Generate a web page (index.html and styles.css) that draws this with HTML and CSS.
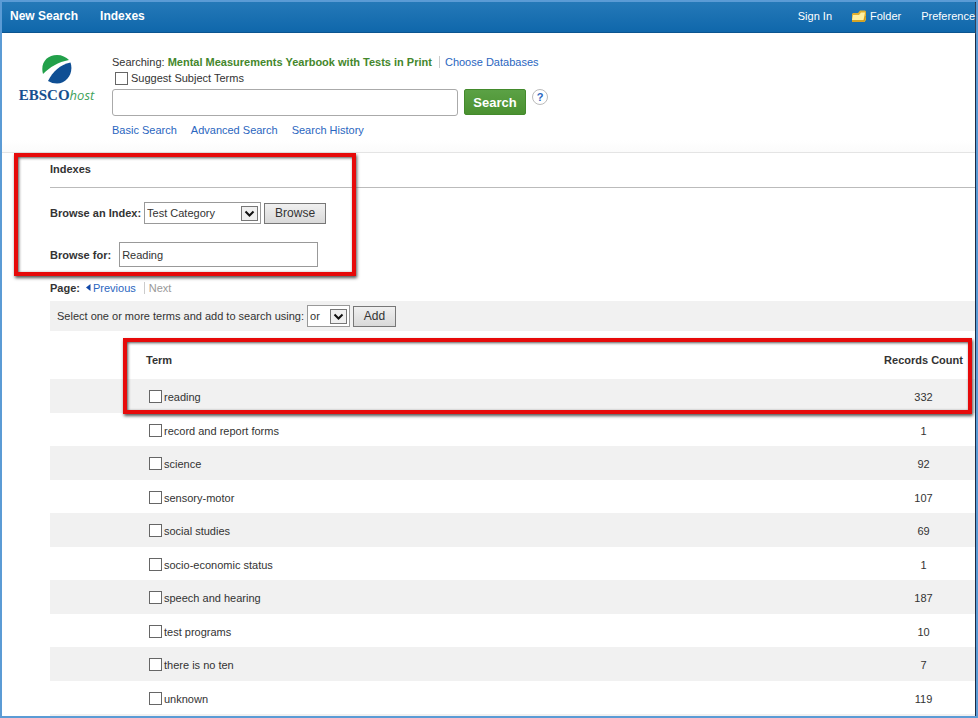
FILE: index.html
```
<!DOCTYPE html>
<html lang="en">
<head>
  <meta charset="UTF-8">
  <meta name="viewport" content="width=device-width, initial-scale=1.0">
  <title>EBSCOhost - Indexes</title>
  <link rel="stylesheet" href="styles.css">
</head>
<body>
<div class="page">
  <header class="topbar">
    <nav class="nav-main">
      <a href="#">New Search</a>
      <a href="#">Indexes</a>
    </nav>
    <nav class="nav-user">
      <a href="#">Sign In</a>
      <a href="#" class="folder">
        <svg width="14" height="12" viewBox="0 0 14 12" aria-hidden="true">
          <path d="M0 4l1-1h5l2-2.500h5l1 1V10l-1.500 2H0z" fill="#e0b030"/>
          <path d="M1 5h6l2-2.500h4L11.500 10H0z" fill="#fff0a0"/>
          <path d="M0 11h12l1.500-5" fill="none" stroke="#c9981c"/>
        </svg>
        Folder
      </a>
      <a href="#">Preference</a>
    </nav>
  </header>

  <section class="search-area">
    <a href="#" class="logo">
      <svg width="30" height="30" viewBox="0 0 30 30" aria-hidden="true">
        <path d="M1 20C-2 9 5 1 15 1c5 0 9 2 12 5C16 8 8 13 1 20z" fill="#22a04a"/>
        <path d="M6 27C11 17 18 11 28.500 8.500 32 19 25 29.500 15 29.500c-3.500 0-6-.8-9-2.500z" fill="#0f4f94"/>
      </svg>
      <span class="logo-text">EBSCO<em>host</em></span>
    </a>
    <form class="search-form">
      <div class="searching">Searching: <strong>Mental Measurements Yearbook with Tests in Print</strong><a href="#">Choose Databases</a></div>
      <div class="suggest">
        <input type="checkbox" id="suggest">
        <label for="suggest">Suggest Subject Terms</label>
      </div>
      <div class="search-row">
        <input type="text" class="search-box" aria-label="Search terms">
        <button type="button" class="search-btn">Search</button>
        <button type="button" class="help" aria-label="Help">?</button>
      </div>
      <div class="search-links">
        <a href="#">Basic Search</a>
        <a href="#">Advanced Search</a>
        <a href="#">Search History</a>
      </div>
    </form>
  </section>

  <main>
    <section class="browse">
      <h1>Indexes</h1>
      <div class="browse-row">
        <label for="index">Browse an Index:</label>
        <span class="select select-index">
          <select id="index"><option>Test Category</option></select>
          <svg width="17" height="15" viewBox="0 0 17 15" aria-hidden="true"><rect x=".5" y=".5" width="16" height="14" fill="#f0f0f0" stroke="#777"/><path d="M4.500 5.500l4 4 4-4" fill="none" stroke="#111" stroke-width="2"/></svg>
        </span>
        <button type="button" class="btn">Browse</button>
      </div>
      <div class="browse-row browse-for">
        <label for="term">Browse for:</label>
        <input type="text" id="term" value="Reading">
      </div>
      <div class="highlight highlight-browse"></div>
    </section>

    <div class="pager">
      <strong>Page:</strong>
      <a href="#"><svg width="5" height="7" viewBox="0 0 5 7" aria-hidden="true"><path d="M4.500 0v7L0 3.500z" fill="#1148a8"/></svg>Previous</a>
      <span class="next">Next</span>
    </div>

    <div class="add-bar">
      <label for="operator">Select one or more terms and add to search using:</label>
      <span class="select select-op">
        <select id="operator"><option>or</option><option>and</option><option>not</option></select>
        <svg width="17" height="15" viewBox="0 0 17 15" aria-hidden="true"><rect x=".5" y=".5" width="16" height="14" fill="#f0f0f0" stroke="#777"/><path d="M4.500 5.500l4 4 4-4" fill="none" stroke="#111" stroke-width="2"/></svg>
      </span>
      <button type="button" class="btn btn-add">Add</button>
    </div>

    <div class="results">
      <table class="terms">
        <thead>
          <tr><th>Term</th><th class="count">Records Count</th></tr>
        </thead>
        <tbody>
          <tr><td><input type="checkbox" id="t1"><label for="t1">reading</label></td><td class="count">332</td></tr>
          <tr><td><input type="checkbox" id="t2"><label for="t2">record and report forms</label></td><td class="count">1</td></tr>
          <tr><td><input type="checkbox" id="t3"><label for="t3">science</label></td><td class="count">92</td></tr>
          <tr><td><input type="checkbox" id="t4"><label for="t4">sensory-motor</label></td><td class="count">107</td></tr>
          <tr><td><input type="checkbox" id="t5"><label for="t5">social studies</label></td><td class="count">69</td></tr>
          <tr><td><input type="checkbox" id="t6"><label for="t6">socio-economic status</label></td><td class="count">1</td></tr>
          <tr><td><input type="checkbox" id="t7"><label for="t7">speech and hearing</label></td><td class="count">187</td></tr>
          <tr><td><input type="checkbox" id="t8"><label for="t8">test programs</label></td><td class="count">10</td></tr>
          <tr><td><input type="checkbox" id="t9"><label for="t9">there is no ten</label></td><td class="count">7</td></tr>
          <tr><td><input type="checkbox" id="t10"><label for="t10">unknown</label></td><td class="count">119</td></tr>
        </tbody>
      </table>
      <div class="highlight highlight-row"></div>
    </div>
  </main>
</div>
</body>
</html>
```
FILE: styles.css
```
* { box-sizing: border-box; }
body {
  margin: 0;
  font-family: "Liberation Sans", Arial, sans-serif;
  font-size: 11px;
  line-height: 16px;
  color: #333;
  background: #fff;
}
a { color: #2a66c0; text-decoration: none; }
input, button, select { font-family: inherit; font-size: 11px; margin: 0; color: #333; }
h1 { margin: 0; }

.page { min-height: 100vh; border: 2px solid #5b9bd5; box-shadow: inset -1px 0 0 #1b2a44; padding-right: 1px; overflow: hidden; }

/* Top bar */
.topbar { display: flex; justify-content: space-between; align-items: center; height: 31px; padding: 0 0 2px 8px; background: linear-gradient(#2579b8, #0f67ab); border-bottom: 1px solid #0b5590; box-shadow: 0 1px 1px #9cb6cc; }
.topbar a { color: #fff; }
.nav-main { display: flex; gap: 22px; font-size: 12px; font-weight: bold; }
.nav-user { display: flex; gap: 20px; }
.folder { display: flex; align-items: center; gap: 4px; }

/* Search */
.search-area { display: flex; gap: 17px; height: 120px; padding: 21px 0 0 16px; background: linear-gradient(#fff 90%, #fbfbfb); border-bottom: 1px solid #e4e4e4; }
.logo { display: flex; flex-direction: column; align-items: center; width: 77px; }
.logo-text { font: bold 15px/22px "Liberation Serif", serif; color: #17508f; }
.logo-text em { font: italic 13px "Open Sans", sans-serif; color: #3fa35b; }
.searching strong { color: #44872c; padding-right: 7px; margin-right: 5px; border-right: 1px solid #ccc; }
input[type="checkbox"] { appearance: none; width: 13px; height: 13px; border: 1px solid #666; background: #fff; }
input[type="checkbox"]:checked { background: #2a66c0; }
.suggest { display: flex; align-items: center; gap: 3px; padding-left: 3px; }
.search-row { display: flex; gap: 6px; margin-top: 3px; }
.search-box { width: 346px; height: 27px; border: 1px solid #aaa; border-radius: 3px; }
.search-btn { width: 62px; height: 26px; padding: 0; border: 1px solid #438a2c; border-radius: 2px; background: linear-gradient(#5ba145, #4a9130); color: #fff; font-size: 13px; font-weight: bold; }
.help { width: 16px; height: 16px; padding: 0; border: 1px solid #bbb; border-radius: 50%; background: #fff; color: #2a66c0; font-weight: bold; line-height: 14px; }
.search-links { display: flex; gap: 14px; margin-top: 6px; }

/* Browse panel */
main { padding-left: 48px; }
.browse { position: relative; height: 124px; }
.browse h1 { height: 35px; padding-top: 8px; font-size: 11px; border-bottom: 1px solid #bbb; }
.browse-row { display: flex; align-items: center; gap: 3px; margin-top: 14px; font-weight: bold; }
.browse-for { gap: 8px; margin-top: 18px; }
.browse-for input { width: 199px; height: 25px; padding: 0 2px; border: 1px solid #999; }
.select { position: relative; display: flex; align-items: center; }
.select select { appearance: none; width: 100%; height: 22px; padding: 0 20px 0 2px; border: 1px solid #999; border-radius: 0; background: #fff; }
.select svg { position: absolute; right: 3px; pointer-events: none; }
.select-index { width: 117px; }
.select-op { width: 43px; }
.btn { width: 62px; height: 21px; padding: 0; border: 1px solid #777; background: linear-gradient(#f0f0f0, #d9d9d9); font-size: 12px; }
.btn-add { width: 43px; }

.pager { display: flex; align-items: center; gap: 6px; height: 24px; padding-bottom: 3px; }
.pager a { display: flex; align-items: center; gap: 2px; }
.next { margin-left: 2px; padding-left: 4px; border-left: 1px solid #ccc; color: #999; line-height: 12px; }
.add-bar { display: flex; align-items: center; gap: 3px; height: 30px; padding-left: 7px; background: #f1f1f1; }

/* Terms */
.results { position: relative; }
.terms { width: 100%; border-collapse: separate; border-spacing: 0; border-bottom: 2px solid #f1f1f1; }
.terms th { height: 48px; padding: 10px 0 0 96px; text-align: left; }
.terms td { height: 33px; padding: 2px 0 0 99px; }
.terms tr:nth-child(odd) td { height: 34px; background: #f1f1f1; }
.terms td input { margin-right: 2px; vertical-align: -2px; }
.terms .count { width: 103px; padding-left: 0; text-align: center; }

/* Red callout frames */
.highlight { position: absolute; border: 4px solid #e60a0a; box-shadow: 1px 2px 3px #555, inset 1px 1px 3px #555; pointer-events: none; }
.highlight-browse { left: -36px; top: 0; width: 342px; height: 123px; }
.highlight-row { left: 73px; right: 3px; top: 7px; height: 76px; }
```
